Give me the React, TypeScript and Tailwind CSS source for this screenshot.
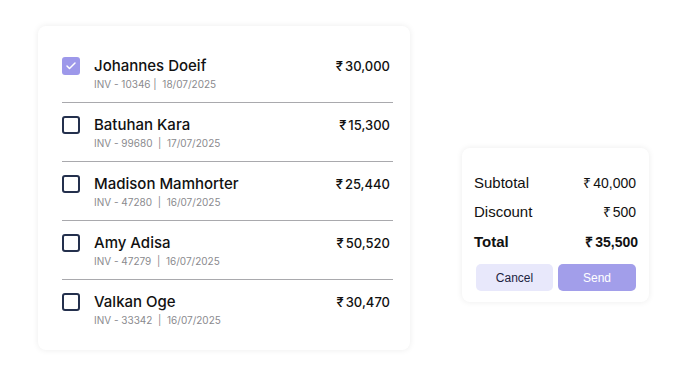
import { Check } from 'lucide-react';

const invoices = [
  { name: 'Johannes Doeif', inv: 'INV - 10346 |  18/07/2025', amount: '30,000', checked: true },
  { name: 'Batuhan Kara', inv: 'INV - 99680  |  17/07/2025', amount: '15,300', checked: false },
  { name: 'Madison Mamhorter', inv: 'INV - 47280  |  16/07/2025', amount: '25,440', checked: false },
  { name: 'Amy Adisa', inv: 'INV - 47279  |  16/07/2025', amount: '50,520', checked: false },
  { name: 'Valkan Oge', inv: 'INV - 33342  |  16/07/2025', amount: '30,470', checked: false },
];

function Rupee({ value }: { value: string }) {
  return (
    <span>
      <span className="mr-[2px]">₹</span>
      {value}
    </span>
  );
}

function InvoiceRow({ item, last }: { item: (typeof invoices)[number]; last: boolean }) {
  return (
    <div className={`flex items-start pt-3 pb-[11px] ${last ? '' : 'border-b border-[#a9a9ad]'}`}>
      <div className="flex h-5 items-center">
        {item.checked ? (
          <div className="flex h-[18px] w-[18px] items-center justify-center rounded-[3px] bg-[#9d98ea]">
            <Check className="h-3 w-3 text-white" strokeWidth={3} />
          </div>
        ) : (
          <div className="h-[18px] w-[18px] rounded-[3px] border-2 border-[#24304d]" />
        )}
      </div>
      <div className="ml-[14px] flex-1">
        <div className="text-[15px] leading-5 font-medium text-[#111]">{item.name}</div>
        <div className="mt-px text-[10px] leading-[14px] whitespace-pre text-[#8a8a8e]">{item.inv}</div>
      </div>
      <div className="pr-[3px] text-[13px] leading-5 font-medium text-[#111]">
        <Rupee value={item.amount} />
      </div>
    </div>
  );
}

export default function App() {
  return (
    <div className="flex h-[377px] w-[688px] items-start bg-white" style={{ fontFamily: 'Inter, "Noto Sans", sans-serif' }}>
      <div className="mt-[26px] ml-[38px] h-[324px] w-[372px] rounded-lg bg-white pt-[18px] pr-[17px] pl-6 shadow-[0_0_6px_rgba(0,0,0,0.08)]">
        {invoices.map((item, i) => (
          <InvoiceRow key={item.name} item={item} last={i === invoices.length - 1} />
        ))}
      </div>

      <div
        className="mt-[148px] ml-[52px] h-[154px] w-[187px] rounded-lg bg-white px-3 pt-[24px] shadow-[0_0_6px_rgba(0,0,0,0.08)]"
        style={{ fontFamily: '"Liberation Sans", Arial, sans-serif' }}
      >
        <div className="flex h-[22px] items-center justify-between text-[15px] text-[#111]">
          <span>Subtotal</span>
          <span className="pr-[1px] text-[14px]">
            <Rupee value="40,000" />
          </span>
        </div>
        <div className="mt-[7px] flex h-[22px] items-center justify-between text-[15px] text-[#111]">
          <span>Discount</span>
          <span className="pr-[1px] text-[14px]">
            <Rupee value="500" />
          </span>
        </div>
        <div className="mt-2 flex h-[22px] items-center justify-between text-[15px] font-bold text-[#111]">
          <span>Total</span>
          <span className="-mr-[1px] text-[14px]">
            <Rupee value="35,500" />
          </span>
        </div>
        <div className="mt-[11px] flex gap-[5px] pl-[2px]">
          <button className="h-[27px] w-[77px] rounded-[5px] bg-[#e8e8fb] text-[12px] text-[#1c2340]">Cancel</button>
          <button className="h-[27px] w-[78px] rounded-[5px] bg-[#a29eea] text-[12px] text-white">Send</button>
        </div>
      </div>
    </div>
  );
}
